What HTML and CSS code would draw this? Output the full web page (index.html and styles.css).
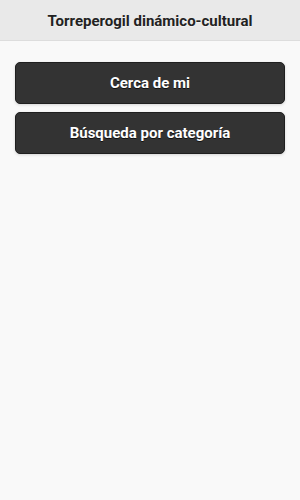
FILE: index.html
```html
<!DOCTYPE html>
<html lang="es">
<head>
  <meta charset="UTF-8" />
  <meta name="viewport" content="width=device-width, initial-scale=1.0"/>
  <title>Torreperogil dinámico-cultural</title>
  <link rel="stylesheet" href="styles.css">
</head>
<body>

<div class="header">
  <h1>Torreperogil dinámico-cultural</h1>
</div>

<div class="content">
  <a href="#" class="btn">Cerca de mi</a>
  <a href="#" class="btn">Búsqueda por categoría</a>
</div>

</body>
</html>
```

FILE: styles.css
```css
html, body { margin: 0; padding: 0; }
body { font-family: Roboto, "Liberation Sans", sans-serif; background: #f9f9f9; color: #333; }
.header { background: #e9e9e9; border-bottom: 1px solid #ddd; height: 40px; display: flex; align-items: center; justify-content: center; }
.header h1 { margin: 0; font-size: 15px; font-weight: bold; color: #222; text-shadow: 0 1px 0 #f3f3f3; padding-top: 1px; }
.content { padding: 21px 15px; display: flex; flex-direction: column; gap: 8px; }
.btn { display: block; background: #333; border: 1px solid #1f1f1f; color: #fff; text-decoration: none; text-align: center; font-weight: bold; font-size: 15px; padding: 11px 0; line-height: 18px; border-radius: 5px; text-shadow: 0 1px 0 #111; box-shadow: 0 1px 3px rgba(0,0,0,0.15); }
```
